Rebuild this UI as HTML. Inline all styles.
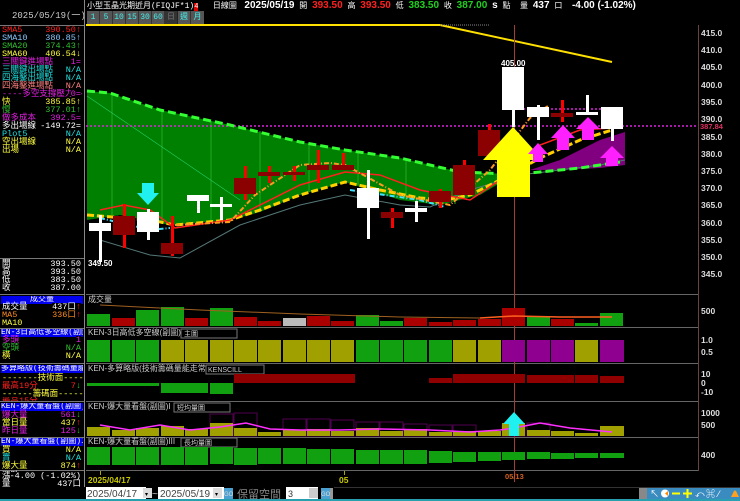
<!DOCTYPE html>
<html><head><meta charset="utf-8"><style>
*{margin:0;padding:0;box-sizing:border-box}
body{width:740px;height:501px;background:#000;overflow:hidden;position:relative;font-family:"Liberation Sans","Noto Sans CJK TC",sans-serif}
#lp{position:absolute;left:0;top:0;width:84px;height:487px;overflow:hidden}
.l{position:absolute;left:2px;font-size:8.5px;line-height:9px;white-space:nowrap;font-family:"Liberation Mono","Noto Sans CJK TC",monospace}
.v{position:absolute;right:3px;font-size:8.5px;line-height:9px;white-space:nowrap;font-family:"Liberation Mono","Noto Sans CJK TC",monospace;background:#000}
.hd{position:absolute;left:1px;width:82px;height:8px;background:#0000ee;color:#fff;font-size:8px;line-height:8px;white-space:nowrap;overflow:hidden;font-family:"Liberation Mono","Noto Sans CJK TC",monospace}
.sep{position:absolute;left:0;width:84px;height:1px;background:#777}
svg text{font-family:"Liberation Sans","Noto Sans CJK TC",sans-serif}
.n{font-family:"Liberation Sans";font-size:10px;font-weight:bold}
</style></head><body>
<div style="position:absolute;left:84px;top:0;width:1px;height:487px;background:#888"></div>
<div id="lp">
<div style="position:absolute;left:12px;top:8px;font-size:9px;color:#ccc;font-family:'Liberation Mono','Noto Sans CJK TC',monospace">2025/05/19(一)</div>
<div class="sep" style="top:25px"></div>
<div class="l" style="top:26px;color:#ff2020">SMA5</div><div class="v" style="top:26px;color:#ff2020">390.50↑</div>
<div class="l" style="top:34px;color:#8cc8ff">SMA10</div><div class="v" style="top:34px;color:#8cc8ff">380.85↑</div>
<div class="l" style="top:42px;color:#30c030">SMA20</div><div class="v" style="top:42px;color:#30c030">374.43↑</div>
<div class="l" style="top:50px;color:#ffff40">SMA60</div><div class="v" style="top:50px;color:#ffff40">406.54↓</div>
<div class="l" style="top:58px;color:#e020e0">三關鍵進場點</div><div class="v" style="top:58px;color:#e020e0">1=</div>
<div class="l" style="top:66px;color:#20e0e0">三關鍵出場點</div><div class="v" style="top:66px;color:#20e0e0">N/A</div>
<div class="l" style="top:74px;color:#20e0e0">四海鑿出場點</div><div class="v" style="top:74px;color:#20e0e0">N/A</div>
<div class="l" style="top:82px;color:#ff8080">四海鑿進場點</div><div class="v" style="top:82px;color:#ff8080">N/A</div>
<div class="l" style="top:90px;color:#e020e0">----多空支撐壓力----</div><div class="v" style="top:90px;color:#e020e0">0=</div>
<div class="l" style="top:98px;color:#ffff40">快</div><div class="v" style="top:98px;color:#ffff40">385.85↑</div>
<div class="l" style="top:106px;color:#30c030">慢</div><div class="v" style="top:106px;color:#30c030">377.01↑</div>
<div class="l" style="top:114px;color:#e020e0">做多成本</div><div class="v" style="top:114px;color:#e020e0">392.5=</div>
<div class="l" style="top:122px;color:#fff">多出場線</div><div class="v" style="top:122px;color:#fff">-149.72=</div>
<div class="l" style="top:130px;color:#20e0e0">Plot5</div><div class="v" style="top:130px;color:#20e0e0">N/A</div>
<div class="l" style="top:138px;color:#ffff40">空出場線</div><div class="v" style="top:138px;color:#ffff40">N/A</div>
<div class="l" style="top:146px;color:#ffff40">出場</div><div class="v" style="top:146px;color:#ffff40">N/A</div>
<div class="sep" style="top:258px"></div>
<div class="l" style="top:260px;color:#fff">開</div><div class="v" style="top:260px;color:#fff">393.50</div>
<div class="l" style="top:268px;color:#fff">高</div><div class="v" style="top:268px;color:#fff">393.50</div>
<div class="l" style="top:276px;color:#fff">低</div><div class="v" style="top:276px;color:#fff">383.50</div>
<div class="l" style="top:284px;color:#fff">收</div><div class="v" style="top:284px;color:#fff">387.00</div>
<div class="sep" style="top:294px"></div>
<div class="hd" style="top:296px;text-align:center">成交量</div>
<div class="l" style="top:303px;color:#fff">成交量</div><div class="v" style="top:303px;color:#fff">437口<span style="color:#f22">↑</span></div>
<div class="l" style="top:311px;color:#ff8c20">MA5</div><div class="v" style="top:311px;color:#ff8c20">336口<span style="color:#f22">↑</span></div>
<div class="l" style="top:319px;color:#ffff40">MA10</div>
<div class="sep" style="top:328px"></div>
<div class="hd" style="top:329px">EN-3日高低多空線(副圖)</div>
<div class="l" style="top:336px;color:#e020e0">多頭</div><div class="v" style="top:336px;color:#e020e0">1</div>
<div class="l" style="top:344px;color:#30c030">空頭</div><div class="v" style="top:344px;color:#30c030">N/A</div>
<div class="l" style="top:352px;color:#ffff40">橫</div><div class="v" style="top:352px;color:#ffff40">N/A</div>
<div class="sep" style="top:363px"></div>
<div class="hd" style="top:365px">多算略版(技術籌碼量能,</div>
<div class="l" style="top:374px;color:#ffff40">-------技術面-----</div>
<div class="l" style="top:382px;color:#ff2020">最高19分</div><div class="v" style="top:382px;color:#ff2020">7<span style="color:#2c2">↓</span></div>
<div class="l" style="top:390px;color:#ffff40">------籌碼面-----</div>
<div class="l" style="top:397px;color:#ff2020;height:4px;overflow:hidden">最高15分</div>
<div class="sep" style="top:401px"></div>
<div class="hd" style="top:403px">KEN-爆大量看盤(副圖)I</div>
<div class="l" style="top:411px;color:#e020e0">爆大量</div><div class="v" style="top:411px;color:#e020e0">561<span style="color:#2c2">↓</span></div>
<div class="l" style="top:419px;color:#ffff40">當日量</div><div class="v" style="top:419px;color:#ffff40">437<span style="color:#f22">↑</span></div>
<div class="l" style="top:427px;color:#e020e0">昨日量</div><div class="v" style="top:427px;color:#e020e0">125<span style="color:#2c2">↓</span></div>
<div class="sep" style="top:437px"></div>
<div class="hd" style="top:438px">EN-爆大量看盤(副圖)II</div>
<div class="l" style="top:446px;color:#ffff40">買</div><div class="v" style="top:446px;color:#ffff40">N/A</div>
<div class="l" style="top:454px;color:#20e0e0">賣</div><div class="v" style="top:454px;color:#20e0e0">N/A</div>
<div class="l" style="top:462px;color:#ffff40">爆大量</div><div class="v" style="top:462px;color:#ffff40">874<span style="color:#f22">↑</span></div>
<div class="sep" style="top:470px"></div>
<div class="l" style="top:472px;color:#fff">漲跌</div><div class="v" style="top:472px;color:#fff">-4.00 (-1.02%)</div>
<div class="l" style="top:480px;color:#fff">量</div><div class="v" style="top:480px;color:#fff">437口</div>
</div>

<div style="position:absolute;left:87px;top:0;font-size:8px;line-height:11px;color:#fff;white-space:nowrap;font-family:'Liberation Mono','Noto Sans CJK TC',monospace">小型玉晶光期近月(FIQJF*1)<span style="background:#d00;color:#fff;font-size:7px">4</span> &nbsp; 日線圖 <span class="n">&nbsp;2025/05/19</span> 開 <span class="n" style="color:#ff2020">393.50</span> 高 <span class="n" style="color:#ff2020">393.50</span> 低 <span class="n" style="color:#20d020">383.50</span> 收 <span class="n" style="color:#20d020">387.00</span> <span class="n">s</span> 點 &nbsp;量 <span class="n">437</span> 口 &nbsp;<span class="n">-4.00 (-1.02%)</span></div>
<div style="position:absolute;left:87px;top:11px;height:13px;display:flex;font-size:8px;line-height:13px;font-family:'Liberation Mono','Noto Sans CJK TC',monospace">
<span style="width:13px;background:#555;color:#4ee;text-align:center;border-right:1px solid #333">1</span>
<span style="width:13px;background:#555;color:#4ee;text-align:center;border-right:1px solid #333">5</span>
<span style="width:13px;background:#555;color:#4ee;text-align:center;border-right:1px solid #333">10</span>
<span style="width:13px;background:#555;color:#4ee;text-align:center;border-right:1px solid #333">15</span>
<span style="width:13px;background:#555;color:#4ee;text-align:center;border-right:1px solid #333">30</span>
<span style="width:13px;background:#555;color:#4ee;text-align:center;border-right:1px solid #333">60</span>
<span style="width:13px;background:#333;color:#777;text-align:center;border-right:1px solid #222">日</span>
<span style="width:13px;background:#555;color:#4ee;text-align:center;border-right:1px solid #333">週</span>
<span style="width:13px;background:#555;color:#4ee;text-align:center">月</span></div>

<svg style="position:absolute;left:0;top:0" width="740" height="501">
<g stroke="#666" stroke-width="1">
<line x1="86" y1="294.5" x2="698" y2="294.5"/><line x1="86" y1="327.5" x2="698" y2="327.5"/>
<line x1="86" y1="363.5" x2="698" y2="363.5"/><line x1="86" y1="401.5" x2="698" y2="401.5"/>
<line x1="86" y1="437.5" x2="698" y2="437.5"/><line x1="86" y1="470.5" x2="698" y2="470.5"/>
</g>
<line x1="698.5" y1="25" x2="698.5" y2="471" stroke="#644" />
<g fill="#ddd" font-size="8.5" font-weight="bold">
<text x="701" y="36">415.0</text><text x="701" y="53">410.0</text><text x="701" y="70">405.0</text>
<text x="701" y="88">400.0</text><text x="701" y="105">395.0</text><text x="701" y="122">390.0</text>
<text x="701" y="157">380.0</text><text x="701" y="174">375.0</text><text x="701" y="191">370.0</text>
<text x="701" y="208">365.0</text><text x="701" y="226">360.0</text><text x="701" y="243">355.0</text>
<text x="701" y="260">350.0</text><text x="701" y="277">345.0</text>
<text x="701" y="140">385.0</text>
<text x="701" y="314">500</text>
<text x="701" y="343">1.0</text><text x="701" y="355">0.5</text>
<text x="701" y="377">10</text><text x="701" y="386">0</text><text x="701" y="395">-10</text>
<text x="701" y="416">1000</text><text x="701" y="428">500</text>
<text x="701" y="458">400</text>
</g>
<rect x="699" y="122" width="24" height="8" fill="#000"/>
<text x="700" y="129" fill="#e03060" font-size="7.5" font-weight="bold">387.84</text>

<polygon fill="#008000" points="87,91 110,93 160,110 230,125 300,142 345,150 400,158 460,172 510,174 505,180 480,195 440,205 400,200 345,182 300,195 260,212 230,220 170,225 120,215 87,220"/>
<g stroke="#22aa22" stroke-width="1">
<line x1="112" y1="94" x2="112" y2="215"/><line x1="162" y1="111" x2="162" y2="224"/><line x1="211" y1="121" x2="211" y2="222"/><line x1="260" y1="131" x2="260" y2="212"/><line x1="309" y1="143" x2="309" y2="192"/><line x1="358" y1="151" x2="358" y2="185"/><line x1="406" y1="160" x2="406" y2="200"/><line x1="455" y1="170" x2="455" y2="204"/>
</g>
<polygon fill="#800080" points="530,170 560,160 600,140 625,132 625,165 600,168 560,170"/>
<line x1="87" y1="96" x2="240" y2="200" stroke="#2c6" stroke-width="0.6"/>
<polyline fill="none" stroke="#ffe000" stroke-width="2" points="86,25 440,25 612,62"/>
<line x1="440" y1="25" x2="490" y2="25" stroke="#888" stroke-dasharray="1,1"/>
<line x1="514.5" y1="25" x2="514.5" y2="482" stroke="#a04030" stroke-width="1"/>
<line x1="86" y1="126" x2="698" y2="126" stroke="#e020e0" stroke-width="1.5" stroke-dasharray="2,2"/>
<line x1="515" y1="109" x2="612" y2="109" stroke="#e020e0" stroke-width="1.5" stroke-dasharray="2,2"/>
<polyline fill="none" stroke="#557777" stroke-width="1" points="100,240 150,255 180,258 240,225 300,205 345,195 400,205 430,207 470,190 520,175 600,165 625,160"/>
<polyline fill="none" stroke="#33ff33" stroke-width="3" stroke-dasharray="8,4" points="87,91 110,93 160,110 230,125 300,142 345,150 400,158 460,172 510,174 530,173 580,168 620,162"/>
<polyline fill="none" stroke="#40e0ff" stroke-width="2" stroke-dasharray="5,2,1,2" points="100,218 150,230 170,228"/>
<polyline fill="none" stroke="#40e0ff" stroke-width="2" stroke-dasharray="5,2,1,2" points="350,190 420,200 445,207"/>
<polyline fill="none" stroke="#ffd000" stroke-width="3" stroke-dasharray="7,3" points="87,215 150,220 175,225 230,220 260,210 300,195 345,182 380,190 420,198 445,200 470,195 500,180 540,158 580,140 612,130"/>
<polyline fill="none" stroke="#ff2020" stroke-width="1.5" points="100,210 124,205 150,210 175,228 230,220 300,185 345,172 380,175 420,190 470,200 500,180 540,145 580,130 612,128"/>
<polyline fill="none" stroke="#ff9a20" stroke-width="2" stroke-dasharray="5,2,1,2" points="175,225 230,222 255,195 300,165 330,163 345,165 400,195 450,205 490,170 530,118 548,106"/>
<g fill="#fff">
<rect x="99" y="215" width="3" height="47"/><rect x="89" y="223" width="22" height="8"/>
<rect x="147" y="209" width="3" height="31"/><rect x="137" y="212" width="22" height="20"/>
<rect x="197" y="195" width="3" height="18"/><rect x="187" y="195" width="22" height="6"/>
<rect x="220" y="197" width="3" height="23"/><rect x="210" y="204" width="22" height="3"/>
<rect x="367" y="170" width="3" height="69"/><rect x="357" y="188" width="22" height="20"/>
<rect x="415" y="201" width="3" height="21"/><rect x="405" y="208" width="22" height="4"/>
<rect x="512" y="67" width="3" height="60"/><rect x="502" y="67" width="22" height="43"/>
<rect x="537" y="105" width="3" height="35"/><rect x="527" y="107" width="22" height="10"/>
<rect x="586" y="95" width="3" height="17"/><rect x="576" y="112" width="22" height="3"/>
<rect x="611" y="107" width="3" height="34"/><rect x="601" y="107" width="22" height="22"/>
</g>
<g>
<rect x="123" y="204" width="3" height="44" fill="#f00"/><rect x="113" y="216" width="22" height="19" fill="#8b0000"/>
<rect x="171" y="216" width="3" height="40" fill="#f00"/><rect x="161" y="243" width="22" height="11" fill="#8b0000"/>
<rect x="244" y="166" width="3" height="34" fill="#f00"/><rect x="234" y="178" width="22" height="16" fill="#8b0000"/>
<rect x="268" y="166" width="3" height="17" fill="#f00"/><rect x="258" y="172" width="22" height="4" fill="#8b0000"/>
<rect x="293" y="166" width="3" height="15" fill="#f00"/><rect x="283" y="172" width="22" height="3" fill="#8b0000"/>
<rect x="317" y="150" width="3" height="33" fill="#f00"/><rect x="307" y="165" width="22" height="5" fill="#8b0000"/>
<rect x="342" y="153" width="3" height="17" fill="#f00"/><rect x="332" y="165" width="22" height="5" fill="#8b0000"/>
<rect x="391" y="208" width="3" height="20" fill="#f00"/><rect x="381" y="212" width="22" height="6" fill="#8b0000"/>
<rect x="439" y="189" width="3" height="19" fill="#f00"/><rect x="429" y="191" width="22" height="11" fill="#8b0000"/>
<rect x="463" y="160" width="3" height="35" fill="#f00"/><rect x="453" y="165" width="22" height="30" fill="#8b0000"/>
<rect x="488" y="124" width="3" height="32" fill="#f00"/><rect x="478" y="130" width="22" height="26" fill="#8b0000"/>
<rect x="561" y="100" width="3" height="22" fill="#f00"/><rect x="551" y="113" width="22" height="4" fill="#8b0000"/>
</g>
<text x="501" y="66" fill="#fff" font-size="8" font-weight="bold">405.00</text>
<text x="88" y="266" fill="#fff" font-size="8" font-weight="bold">349.50</text>
<polygon fill="#20f0f0" points="142,183 154,183 154,193 159,193 148,205 137,193 142,193"/>
<polygon fill="#ffff00" points="513,127 543,160 530,160 530,197 497,197 497,160 483,160"/>
<polygon fill="#ff20ff" points="563,125 575,138 569,138 569,150 557,150 557,138 551,138"/>
<polygon fill="#ff20ff" points="588,117 600,129 594,129 594,140 582,140 582,129 576,129"/>
<polygon fill="#ff20ff" points="612,146 624,158 618,158 618,166 606,166 606,158 600,158"/>
<polygon fill="#ff20ff" points="538,143 548,154 543,154 543,162 533,162 533,154 528,154"/>

<text x="88" y="302" fill="#ccc" font-size="8">成交量</text>
<g>
<rect x="87" y="314" width="23" height="12" fill="#10a010"/><rect x="112" y="318" width="23" height="8" fill="#a00"/>
<rect x="136" y="310" width="23" height="16" fill="#10a010"/><rect x="161" y="307" width="23" height="19" fill="#10a010"/>
<rect x="185" y="318" width="23" height="8" fill="#a00"/><rect x="210" y="308" width="23" height="18" fill="#10a010"/>
<rect x="234" y="317" width="23" height="9" fill="#a00"/><rect x="258" y="321" width="23" height="5" fill="#a00"/>
<rect x="283" y="318" width="23" height="8" fill="#bbb"/><rect x="307" y="316" width="23" height="10" fill="#a00"/>
<rect x="331" y="321" width="23" height="5" fill="#a00"/><rect x="356" y="315" width="23" height="11" fill="#10a010"/>
<rect x="380" y="321" width="23" height="5" fill="#10a010"/><rect x="404" y="318" width="23" height="8" fill="#a00"/>
<rect x="429" y="322" width="23" height="4" fill="#a00"/><rect x="453" y="320" width="23" height="6" fill="#a00"/>
<rect x="478" y="319" width="23" height="7" fill="#a00"/><rect x="502" y="308" width="23" height="18" fill="#a00"/>
<rect x="527" y="317" width="23" height="9" fill="#10a010"/><rect x="551" y="319" width="23" height="7" fill="#a00"/>
<rect x="575" y="323" width="23" height="3" fill="#10a010"/><rect x="600" y="313" width="23" height="13" fill="#10a010"/>
</g>
<polyline fill="none" stroke="#a06020" stroke-width="1" points="100,305 200,310 300,314 400,317 480,318"/>
<polyline fill="none" stroke="#ff6020" stroke-width="1.5" points="480,318 514,316 560,317 612,317"/>
<text x="88" y="335" fill="#ccc" font-size="8">KEN-3日高低多空線(副圖)</text>
<rect x="181" y="329" width="56" height="9" fill="#000" stroke="#777"/><text x="184" y="336" fill="#ccc" font-size="7">主圖</text>
<g fill="#10a010"><rect x="87" y="340" width="23" height="22"/><rect x="112" y="340" width="23" height="22"/><rect x="136" y="340" width="23" height="22"/>
<rect x="356" y="340" width="23" height="22"/><rect x="380" y="340" width="23" height="22"/><rect x="404" y="340" width="23" height="22"/><rect x="429" y="340" width="23" height="22"/></g>
<g fill="#a0a000"><rect x="161" y="340" width="23" height="22"/><rect x="185" y="340" width="23" height="22"/><rect x="210" y="340" width="23" height="22"/><rect x="234" y="340" width="23" height="22"/><rect x="258" y="340" width="23" height="22"/><rect x="283" y="340" width="23" height="22"/><rect x="307" y="340" width="23" height="22"/><rect x="331" y="340" width="23" height="22"/>
<rect x="453" y="340" width="23" height="22"/><rect x="478" y="340" width="23" height="22"/><rect x="575" y="340" width="23" height="22"/></g>
<g fill="#900090"><rect x="502" y="340" width="23" height="22"/><rect x="527" y="340" width="23" height="22"/><rect x="551" y="340" width="23" height="22"/><rect x="600" y="340" width="24" height="22"/></g>
<text x="88" y="371" fill="#ccc" font-size="8">KEN-多算略版(技術籌碼量能走常)</text>
<rect x="206" y="365" width="58" height="9" fill="#000" stroke="#777"/><text x="208" y="372" fill="#ccc" font-size="7">KENSCILL</text>
<g fill="#10a010"><rect x="87" y="383" width="72" height="3"/><rect x="161" y="383" width="47" height="10"/><rect x="210" y="383" width="23" height="11"/></g>
<g fill="#900000"><rect x="234" y="374" width="121" height="9"/><rect x="429" y="378" width="23" height="5"/><rect x="453" y="374" width="72" height="9"/><rect x="527" y="375" width="47" height="8"/><rect x="575" y="375" width="23" height="8"/><rect x="600" y="376" width="24" height="7"/></g>
<text x="88" y="409" fill="#ccc" font-size="8">KEN-爆大量看盤(副圖)I</text>
<rect x="174" y="403" width="56" height="9" fill="#000" stroke="#777"/><text x="177" y="410" fill="#ccc" font-size="7">短均量圖</text>
<g fill="none" stroke="#500050"><rect x="210" y="414" width="23" height="22"/><rect x="234" y="413" width="23" height="23"/><rect x="283" y="419" width="23" height="17"/><rect x="307" y="419" width="23" height="17"/><rect x="331" y="420" width="23" height="16"/><rect x="356" y="422" width="23" height="14"/><rect x="380" y="422" width="23" height="14"/><rect x="404" y="424" width="23" height="12"/><rect x="429" y="425" width="23" height="11"/><rect x="453" y="425" width="23" height="11"/><rect x="502" y="425" width="23" height="11"/><rect x="527" y="423" width="23" height="13"/></g>
<g fill="#a0a000"><rect x="87" y="427" width="23" height="9"/><rect x="112" y="430" width="23" height="6"/><rect x="136" y="428" width="23" height="8"/><rect x="161" y="426" width="23" height="10"/><rect x="185" y="429" width="23" height="7"/><rect x="210" y="423" width="23" height="13"/><rect x="234" y="428" width="23" height="8"/><rect x="258" y="432" width="23" height="4"/><rect x="283" y="430" width="23" height="6"/><rect x="307" y="429" width="23" height="7"/><rect x="331" y="431" width="23" height="5"/><rect x="356" y="428" width="23" height="8"/><rect x="380" y="431" width="23" height="5"/><rect x="404" y="429" width="23" height="7"/><rect x="429" y="432" width="23" height="4"/><rect x="453" y="431" width="23" height="5"/><rect x="478" y="431" width="23" height="5"/><rect x="502" y="423" width="23" height="13"/><rect x="527" y="430" width="23" height="6"/><rect x="551" y="431" width="23" height="5"/><rect x="575" y="433" width="23" height="3"/><rect x="600" y="426" width="24" height="10"/></g>
<polyline fill="none" stroke="#ff30ff" stroke-width="1.5" points="100,425 130,430 160,425 190,430 220,427 246,423 270,429 300,430 340,430 380,429 430,430 470,432 500,430 514,428 540,423 570,428 612,432"/>
<polygon fill="#20f0f0" points="514,412 525,424 519,424 519,436 509,436 509,424 503,424"/>
<text x="88" y="444" fill="#ccc" font-size="8">KEN-爆大量看盤(副圖)III</text>
<rect x="181" y="438" width="56" height="9" fill="#000" stroke="#777"/><text x="184" y="445" fill="#ccc" font-size="7">長均量圖</text>
<g fill="#10a010"><rect x="87" y="447" width="23" height="18"/><rect x="112" y="447" width="23" height="18"/><rect x="136" y="447" width="23" height="18"/><rect x="161" y="447" width="23" height="18"/><rect x="185" y="447" width="23" height="18"/><rect x="210" y="447" width="23" height="17"/><rect x="234" y="448" width="23" height="17"/><rect x="258" y="448" width="23" height="16"/><rect x="283" y="448" width="23" height="16"/><rect x="307" y="449" width="23" height="15"/><rect x="331" y="449" width="23" height="15"/><rect x="356" y="450" width="23" height="14"/><rect x="380" y="450" width="23" height="14"/><rect x="404" y="450" width="23" height="14"/><rect x="429" y="451" width="23" height="12"/><rect x="453" y="452" width="23" height="10"/><rect x="478" y="452" width="23" height="9"/><rect x="502" y="452" width="23" height="8"/><rect x="527" y="452" width="23" height="7"/><rect x="551" y="453" width="23" height="6"/><rect x="575" y="453" width="23" height="5"/><rect x="600" y="453" width="24" height="5"/></g>
<line x1="100.5" y1="471" x2="100.5" y2="475" stroke="#aa0"/>
<line x1="344.5" y1="471" x2="344.5" y2="475" stroke="#aa0"/>
<text x="88" y="483" fill="#c8c800" font-size="8.5" font-weight="bold">2025/04/17</text>
<text x="339" y="483" fill="#c8c800" font-size="8.5" font-weight="bold">05</text>
<text x="505" y="479" fill="#d06020" font-size="7.5" font-weight="bold">05/13</text>
<rect x="0" y="487" width="740" height="12" fill="#000"/>
<rect x="0" y="499" width="740" height="2" fill="#28a0b0"/>
<rect x="86" y="487" width="60" height="12" fill="#fff"/><text x="87" y="497" fill="#444" font-size="10" font-family="Liberation Serif">2025/04/17</text>
<rect x="143" y="488" width="9" height="10" fill="#ddd"/><text x="145" y="496" fill="#000" font-size="6">▾</text>
<text x="152" y="497" fill="#ccc" font-size="10">~</text>
<rect x="158" y="487" width="66" height="12" fill="#fff"/><text x="160" y="497" fill="#444" font-size="10" font-family="Liberation Serif">2025/05/19</text>
<rect x="213" y="488" width="9" height="10" fill="#ddd"/><text x="215" y="496" fill="#000" font-size="6">▾</text>
<rect x="224" y="488" width="9" height="11" fill="#4aa0d0"/><text x="224" y="496" fill="#ddd" font-size="6">GO</text>
<text x="237" y="498" fill="#888" font-size="11">保留空間</text>
<rect x="286" y="487" width="32" height="12" fill="#fff"/><text x="288" y="497" fill="#333" font-size="9">3</text>
<rect x="309" y="488" width="9" height="10" fill="#ccc"/>
<rect x="321" y="488" width="9" height="11" fill="#4aa0d0"/><text x="321" y="496" fill="#ddd" font-size="6">GO</text>
<rect x="330" y="488" width="3" height="11" fill="#999"/>
<line x1="334" y1="487.5" x2="740" y2="487.5" stroke="#333"/>
<rect x="639" y="488" width="8" height="11" fill="#888"/>
<rect x="647" y="488" width="93" height="11" fill="#3a8cc0"/>
<g font-size="9" fill="#fff"><text x="650" y="497">↖</text><circle cx="665" cy="493.5" r="4" fill="#fff"/><path d="M665 493.5 L668 491 L668 496Z" fill="#f80"/>
<rect x="672" y="492.5" width="8" height="2" fill="#ff0"/><rect x="683" y="492.5" width="9" height="2" fill="#ff0"/><rect x="686.5" y="489" width="2" height="9" fill="#ff0"/>
<text x="695" y="497">⤺</text><text x="706" y="497">⌘</text><text x="718" y="497">⁄</text></g>
<path d="M731 497 L733 493 Q735 488 737 493 L739 497Z" fill="#ffa020"/>
</svg>
</body></html>
